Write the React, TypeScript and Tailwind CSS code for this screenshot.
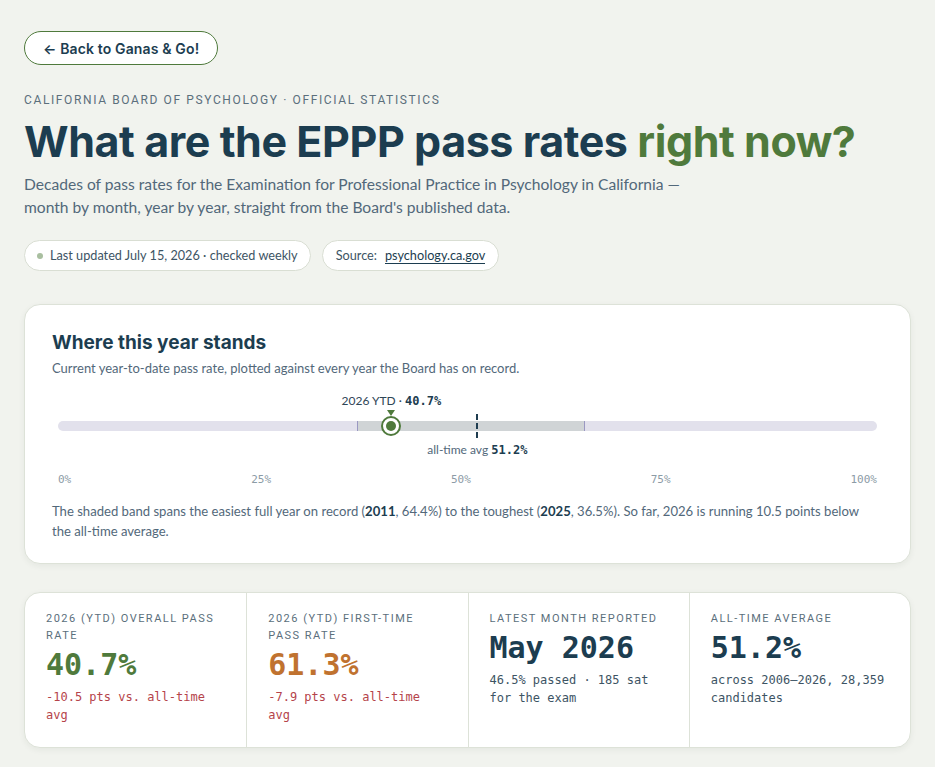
import React from 'react';

const heading = "font-['Inter','Noto_Sans',sans-serif]";
const body = "font-['Lato','Noto_Sans',sans-serif]";
const mono = "font-['DejaVu_Sans_Mono','Liberation_Mono',monospace]";
const label = "font-['Roboto','Inter',sans-serif]";

interface Stat {
  title: string;
  value: string;
  valueClass: string;
  note: string;
  noteClass: string;
}

const stats: Stat[] = [
  {
    title: '2026 (YTD) Overall pass rate',
    value: '40.7%',
    valueClass: 'text-[#4f7a3c]',
    note: '-10.5 pts vs. all-time avg',
    noteClass: 'text-[#b5434a]',
  },
  {
    title: '2026 (YTD) First-time pass rate',
    value: '61.3%',
    valueClass: 'text-[#c0722f]',
    note: '-7.9 pts vs. all-time avg',
    noteClass: 'text-[#b5434a]',
  },
  {
    title: 'Latest month reported',
    value: 'May 2026',
    valueClass: 'text-[#1c3d50]',
    note: '46.5% passed · 185 sat for the exam',
    noteClass: 'text-[#3d5464]',
  },
  {
    title: 'All-time average',
    value: '51.2%',
    valueClass: 'text-[#1c3d50]',
    note: 'across 2006–2026, 28,359 candidates',
    noteClass: 'text-[#3d5464]',
  },
];

const ytd = 40.7;
const avg = 51.2;
const easiest = 64.4;
const toughest = 36.5;

function RangeChart() {
  return (
    <div className="px-[6px] pt-[13px]">
      <div className="relative h-[80px]">
        {/* current year label + pointer */}
        <div
          className={`absolute top-0 -translate-x-1/2 whitespace-nowrap text-[12px] text-[#2f4656] ${body}`}
          style={{ left: `${ytd}%` }}
        >
          2026 YTD · <span className={`font-bold text-[#1c3d50] ${mono}`}>40.7%</span>
        </div>
        <div
          className="absolute top-[18px] h-0 w-0 -translate-x-1/2 border-x-[4px] border-t-[6px] border-x-transparent border-t-[#4f7a3c]"
          style={{ left: `${ytd}%` }}
        />
        {/* track */}
        <div className="absolute left-0 right-0 top-[29px] h-[10px] rounded-full bg-[#e2e1ec]" />
        {/* easiest/toughest band */}
        <div
          className="absolute top-[29px] h-[10px] border-x border-[#9a98c2] bg-[#d0d4d6]"
          style={{ left: `${toughest}%`, width: `${easiest - toughest}%` }}
        />
        {/* all-time average */}
        <div
          className="absolute top-[22px] h-[24px] w-0 -translate-x-1/2 border-l-2 border-dashed border-[#1f3d50]"
          style={{ left: `${avg}%` }}
        />
        <div
          className={`absolute top-[49px] -translate-x-1/2 whitespace-nowrap text-[12px] text-[#52687a] ${body}`}
          style={{ left: `${avg}%` }}
        >
          all-time avg <span className={`font-bold text-[#1c3d50] ${mono}`}>51.2%</span>
        </div>
        {/* marker */}
        <div
          className="absolute top-[24px] flex h-[20px] w-[20px] -translate-x-1/2 items-center justify-center rounded-full border-2 border-[#4f7a3c] bg-white"
          style={{ left: `${ytd}%` }}
        >
          <div className="h-[10px] w-[10px] rounded-full bg-[#4f7a3c]" />
        </div>
      </div>
      <div className={`flex justify-between text-[11px] text-[#8c9ba6] ${mono}`}>
        <span>0%</span>
        <span>25%</span>
        <span>50%</span>
        <span>75%</span>
        <span>100%</span>
      </div>
    </div>
  );
}

export default function App() {
  return (
    <div className={`min-h-screen bg-[#f1f3ee] px-6 pt-[31px] pb-6 ${body}`}>
      <button
        className={`flex h-[34px] items-center rounded-full border border-[#4f7a3c] bg-white px-[18px] text-[14px] font-semibold tracking-[0.01em] text-[#1c3d50] ${heading}`}
      >
        ← Back to Ganas &amp; Go!
      </button>

      <div className={`mt-[26px] text-[12px] uppercase tracking-[0.135em] text-[#5b6f7c] ${label}`}>
        California Board of Psychology · Official Statistics
      </div>
      <h1 className={`mt-[6px] text-[43px] leading-[52px] font-bold tracking-[-0.01em] text-[#1c3d50] ${heading}`}>
        What are the EPPP pass rates <span className="text-[#4f7a3c]">right now?</span>
      </h1>
      <p className="mt-[6px] max-w-[690px] text-[15.6px] leading-[23px] text-[#52687a]">
        Decades of pass rates for the Examination for Professional Practice in Psychology in California —
        month by month, year by year, straight from the Board's published data.
      </p>

      <div className="mt-[21px] flex gap-[11px] text-[12.7px] text-[#3d5464]">
        <div className="flex h-[31px] items-center gap-[7px] rounded-full border border-[#d9ded3] bg-white px-[12px]">
          <span className="h-[6px] w-[6px] rounded-full bg-[#a9bfa0]" />
          Last updated July 15, 2026 · checked weekly
        </div>
        <div className="flex h-[31px] items-center gap-[8px] rounded-full border border-[#d9ded3] bg-white px-[13px]">
          Source:
          <span className="border-b border-[#1c3d50] leading-[16px] text-[#1c3d50]">psychology.ca.gov</span>
        </div>
      </div>

      <section className="mt-[33px] rounded-[16px] border border-[#dde2d8] bg-white px-[27px] pt-[26px] pb-[22px] shadow-[0_2px_6px_rgba(30,50,40,0.06)]">
        <h2 className={`text-[19px] leading-[24px] font-bold text-[#1c3d50] ${heading}`}>Where this year stands</h2>
        <p className="mt-[4px] text-[13px] text-[#52687a]">
          Current year-to-date pass rate, plotted against every year the Board has on record.
        </p>
        <RangeChart />
        <p className="mt-[13px] max-w-[815px] text-[13.1px] leading-[20px] text-[#52687a]">
          The shaded band spans the easiest full year on record (<b className="text-[#1c3d50]">2011</b>, 64.4%) to the
          toughest (<b className="text-[#1c3d50]">2025</b>, 36.5%). So far, 2026 is running 10.5 points below the all-time
          average.
        </p>
      </section>

      <section className="mt-[28px] grid grid-cols-4 overflow-hidden rounded-[16px] border border-[#dde2d8] bg-white shadow-[0_2px_6px_rgba(30,50,40,0.06)]">
        {stats.map((s, i) => (
          <div key={s.title} className={`min-h-[154px] px-[21px] pt-[17px] pb-4 ${i > 0 ? 'border-l border-[#dde2d8]' : ''}`}>
            <div className={`text-[11px] leading-[17px] uppercase tracking-[0.135em] text-[#5b6f7c] ${label}`}>{s.title}</div>
            <div className={`mt-[2px] text-[30px] leading-[38px] font-bold ${mono} ${s.valueClass}`}>{s.value}</div>
            <div className={`mt-[4px] text-[12px] leading-[18px] ${mono} ${s.noteClass}`}>{s.note}</div>
          </div>
        ))}
      </section>
    </div>
  );
}
